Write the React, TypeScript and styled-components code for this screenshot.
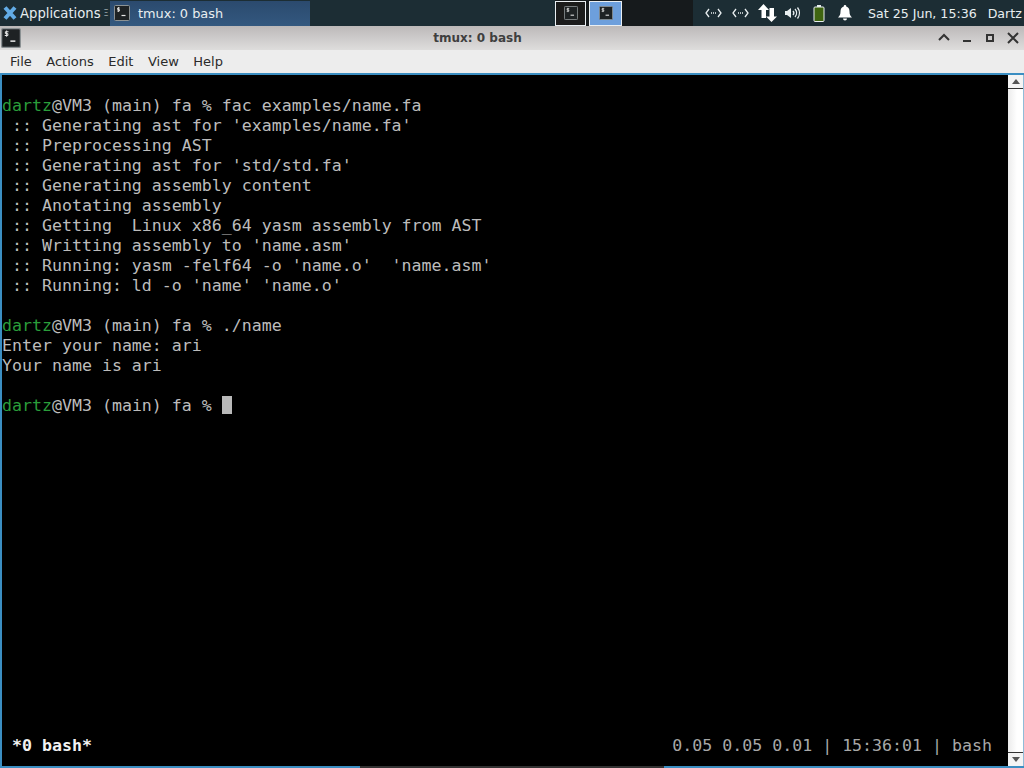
import styled, { createGlobalStyle } from "styled-components";

const GlobalStyle = createGlobalStyle`
  html, body {
    margin: 0;
    padding: 0;
    background: #000;
  }
  * {
    box-sizing: border-box;
  }
`;

const Desktop = styled.div`
  width: 1024px;
  height: 768px;
  display: flex;
  flex-direction: column;
  overflow: hidden;
  font-family: "DejaVu Sans", sans-serif;
`;

const Panel = styled.div`
  height: 26px;
  display: flex;
  align-items: center;
  background: #1c2d34;
  color: #e8eef0;
  font-size: 13.2px;
`;

const AppMenu = styled.div`
  width: 110px;
  display: flex;
  align-items: center;
  gap: 2px;
  padding-left: 2px;
  white-space: nowrap;

  svg {
    flex: none;
  }
`;

const Handle = styled.span`
  margin-left: 1px;
  color: #9aa5a9;
  font-size: 8px;
`;

const TaskButton = styled.div`
  width: 200px;
  height: 25px;
  display: flex;
  align-items: center;
  gap: 8px;
  padding-left: 4px;
  background: linear-gradient(#2b4a6e, #33587f);
  font-size: 12.9px;
`;

const TaskSpacer = styled.div`
  width: 245px;
`;

const Pager = styled.div`
  width: 138px;
  height: 26px;
  display: flex;
  align-items: center;
  gap: 3px;
  background: #161a1c;
`;

const PagerCell = styled.div<{ $active?: boolean }>`
  width: ${(p) => (p.$active ? "33px" : "31px")};
  height: 25px;
  display: flex;
  align-items: center;
  justify-content: center;
  border: 1px solid #e9eef2;
  background: ${(p) => (p.$active ? "#6d9fdc" : "#1b1b1b")};
`;

const Tray = styled.div`
  flex: 1;
  display: flex;
  align-items: center;
  padding-left: 12px;
  white-space: nowrap;
`;

const TrayIcons = styled.div`
  display: grid;
  grid-template-columns: 27px 26px 27px 28px 25px 14px;
  align-items: center;
`;

const Clock = styled.span`
  margin-left: 16px;
  font-size: 12.6px;
`;

const UserName = styled.span`
  margin-left: 11px;
  font-size: 12.6px;
`;

const TitleBar = styled.div`
  height: 24px;
  display: flex;
  align-items: center;
  justify-content: space-between;
  background: linear-gradient(#bcb9b9, #dedddc);
  color: #3f3f3f;
  font-size: 12px;
  font-weight: bold;
`;

const TitleIcon = styled.div`
  width: 21px;
  height: 21px;
  display: flex;
  align-items: center;
  justify-content: center;
`;

const TitleText = styled.span`
  margin-right: 3px;
`;

const WindowButtons = styled.div`
  display: flex;
  align-items: center;
  gap: 9px;
  padding-right: 4px;
`;

const MenuBar = styled.div`
  height: 23px;
  display: flex;
  align-items: center;
  gap: 14.5px;
  padding-left: 10px;
  background: #ededed;
  color: #2a2a2a;
  font-size: 13px;
`;

const MenuItem = styled.span`
  display: block;
`;

const TerminalFrame = styled.div`
  flex: 1;
  min-height: 0;
  display: flex;
  border: solid #3b8ec2;
  border-width: 2px 0 0 2px;
  background: #000;
`;

const Terminal = styled.div`
  flex: 1;
  display: flex;
  flex-direction: column;
  justify-content: space-between;
  padding-top: 21px;
  font-family: "DejaVu Sans Mono", monospace;
  font-size: 16.6px;
  line-height: 20px;
  color: #bcbcbc;
`;

const Output = styled.div`
  white-space: pre;
`;

const Line = styled.div`
  height: 20px;
`;

const Prompt = styled.span`
  color: #2a9d3a;
`;

const Cursor = styled.span`
  display: inline-block;
  width: 10px;
  height: 18px;
  vertical-align: -3px;
  background: #b9b9b9;
`;

const StatusLine = styled.div`
  height: 20px;
  margin-bottom: 10px;
  display: flex;
  justify-content: space-between;
  padding: 0 16px 0 10px;
  white-space: pre;
  color: #a8a8a8;
`;

const ActiveWindow = styled.span`
  color: #f2f2f2;
  font-weight: bold;
`;

const ScrollBar = styled.div`
  width: 16px;
  display: flex;
  flex-direction: column;
  justify-content: space-between;
  background: linear-gradient(90deg, #ececec, #fff 60%);
  border-right: 1px solid #8fbcd8;
`;

const ScrollButton = styled.div<{ $down?: boolean }>`
  height: 14px;
  display: flex;
  align-items: center;
  justify-content: center;
  background: #f4f4f4;
  ${(p) => (p.$down ? "border-top: 1px solid #333;" : "border-bottom: 1px solid #333;")}
`;

const BottomEdge = styled.div`
  height: 2px;
  display: flex;
  background: #3b8ec2;
`;

const EdgeGap = styled.div`
  width: 304px;
  margin-left: 360px;
  background: #333;
`;

const TermIcon = ({ size = 16 }: { size?: number }) => (
  <svg width={size} height={size} viewBox="0 0 16 16">
    <rect x="0.5" y="0.5" width="15" height="15" rx="1" fill="#1e2224" stroke="#8b9193" />
    <path d="M6 3H3.500v1.500h2V6H3M4.500 2v5" fill="none" stroke="#e8e8e8" strokeWidth="0.8" />
    <path d="M7.500 10.500h4" stroke="#e8e8e8" strokeWidth="1.2" />
  </svg>
);

const XfceLogo = () => (
  <svg width="16" height="18" viewBox="0 0 16 18">
    <path d="M3 3.500L13 14.500M13 3.500L3 14.500" fill="none" stroke="#62ace6" strokeWidth="4" />
  </svg>
);

const NetIcon = () => (
  <svg width="17" height="12" viewBox="0 0 17 12" fill="none" stroke="#e8eef0" strokeWidth="1.3">
    <path d="M4 2L1 6l3 4M13 2l3 4-3 4" />
    <path d="M6 6h1M8 6h1M10 6h1" />
  </svg>
);

const UpDownIcon = () => (
  <svg width="19" height="18" viewBox="0 0 19 18" fill="#fff">
    <path d="M5.500 0L11 6H8v8H3.500V6H0z" />
    <path d="M13.500 18L8 12.500h3.500V4H16v8.500h3z" />
  </svg>
);

const VolumeIcon = () => (
  <svg width="16" height="14" viewBox="0 0 16 14" fill="none" stroke="#e8eef0" strokeWidth="1.3">
    <path d="M0 5h2l4-3v10l-4-3H0z" fill="#e8eef0" stroke="none" />
    <path d="M8 5a3 3 0 010 4M10 3a6 6 0 010 8M12.500 1.500a9 9 0 010 11" />
  </svg>
);

const BatteryIcon = () => (
  <svg width="12" height="17" viewBox="0 0 12 17">
    <rect x="4" y="0" width="4" height="2" fill="#e8eef0" />
    <rect x="1" y="2" width="10" height="14.500" rx="1" fill="#3f6410" stroke="#e8eef0" />
  </svg>
);

const BellIcon = () => (
  <svg width="14" height="16" viewBox="0 0 14 16" fill="#fff">
    <path d="M7 0a1.200 1.200 0 011.200 1.400C10.500 2 11.500 4 11.500 6.500c0 3 .8 4.500 2.500 6H0c1.700-1.500 2.500-3 2.500-6C2.500 4 3.500 2 5.800 1.400A1.200 1.200 0 017 0z" />
    <path d="M5 13.500h4a2 2 0 01-4 0z" />
  </svg>
);

const WindowButtonIcon = ({ d }: { d: string }) => (
  <svg width="14" height="14" viewBox="0 0 14 14" fill="none" stroke="#333" strokeWidth="2">
    <path d={d} />
  </svg>
);

const Arrow = ({ down }: { down?: boolean }) => (
  <svg width="8" height="5" viewBox="0 0 8 5" fill="#555">
    <path d={down ? "M0 0h8L4 5z" : "M0 5h8L4 0z"} />
  </svg>
);

const menus = ["File", "Actions", "Edit", "View", "Help"];

const buildLines = [
  " :: Generating ast for 'examples/name.fa'",
  " :: Preprocessing AST",
  " :: Generating ast for 'std/std.fa'",
  " :: Generating assembly content",
  " :: Anotating assembly",
  " :: Getting  Linux x86_64 yasm assembly from AST",
  " :: Writting assembly to 'name.asm'",
  " :: Running: yasm -felf64 -o 'name.o'  'name.asm'",
  " :: Running: ld -o 'name' 'name.o'",
];

const PromptText = ({ cmd }: { cmd: string }) => (
  <Line>
    <Prompt>dartz</Prompt>@VM3 (main) fa % {cmd}
  </Line>
);

export default function App() {
  return (
    <Desktop>
      <GlobalStyle />
      <Panel>
        <AppMenu>
          <XfceLogo />
          Applications
          <Handle>Ξ</Handle>
        </AppMenu>
        <TaskButton>
          <TermIcon />
          tmux: 0 bash
        </TaskButton>
        <TaskSpacer />
        <Pager>
          <PagerCell>
            <TermIcon size={14} />
          </PagerCell>
          <PagerCell $active>
            <TermIcon size={14} />
          </PagerCell>
        </Pager>
        <Tray>
          <TrayIcons>
            <NetIcon />
            <NetIcon />
            <UpDownIcon />
            <VolumeIcon />
            <BatteryIcon />
            <BellIcon />
          </TrayIcons>
          <Clock>Sat 25 Jun, 15:36</Clock>
          <UserName>Dartz</UserName>
        </Tray>
      </Panel>
      <TitleBar>
        <TitleIcon>
          <TermIcon size={20} />
        </TitleIcon>
        <TitleText>tmux: 0 bash</TitleText>
        <WindowButtons>
          <WindowButtonIcon d="M2 9l5-5 5 5" />
          <WindowButtonIcon d="M3 10h8" />
          <WindowButtonIcon d="M4 4h6v6H4z" />
          <WindowButtonIcon d="M2 2l10 10M12 2L2 12" />
        </WindowButtons>
      </TitleBar>
      <MenuBar>
        {menus.map((m) => (
          <MenuItem key={m}>{m}</MenuItem>
        ))}
      </MenuBar>
      <TerminalFrame>
        <Terminal>
          <Output>
            <PromptText cmd="fac examples/name.fa" />
            {buildLines.map((l) => (
              <Line key={l}>{l}</Line>
            ))}
            <Line />
            <PromptText cmd="./name" />
            <Line>Enter your name: ari</Line>
            <Line>Your name is ari</Line>
            <Line />
            <Line>
              <Prompt>dartz</Prompt>@VM3 (main) fa % <Cursor />
            </Line>
          </Output>
          <StatusLine>
            <ActiveWindow>*0 bash*</ActiveWindow>
            <span>0.05 0.05 0.01 | 15:36:01 | bash</span>
          </StatusLine>
        </Terminal>
        <ScrollBar>
          <ScrollButton>
            <Arrow />
          </ScrollButton>
          <ScrollButton $down>
            <Arrow down />
          </ScrollButton>
        </ScrollBar>
      </TerminalFrame>
      <BottomEdge>
        <EdgeGap />
      </BottomEdge>
    </Desktop>
  );
}
